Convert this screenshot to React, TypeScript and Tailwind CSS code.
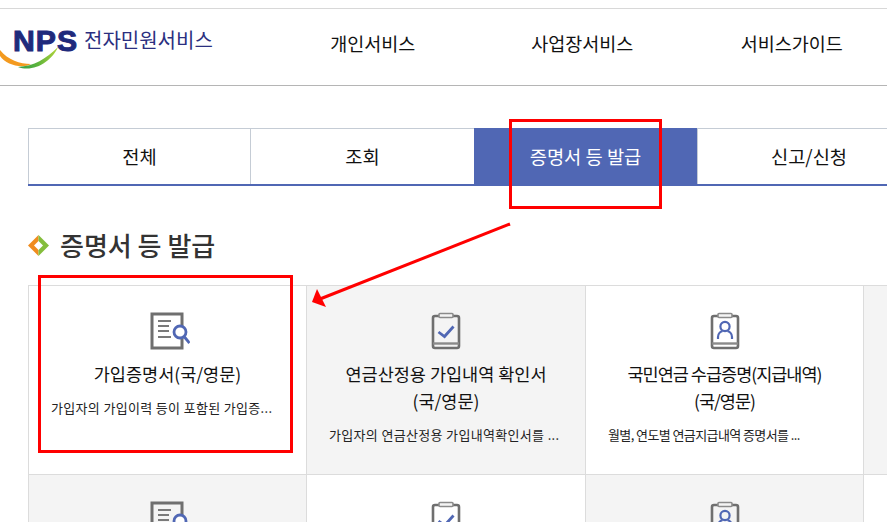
const font = { fontFamily: '"Noto Sans CJK KR", "Noto Sans", sans-serif' }

function DocIcon() {
    return (
        <svg className="ml-[4px]" width="40" height="38" viewBox="0 0 40 38" fill="none">
            <rect x="2" y="2" width="30" height="34" stroke="#6f6f6f" strokeWidth="3" />
            <path d="M8 9h13M8 14h11M8 19h11M8 25h13" stroke="#7a7a7a" strokeWidth="2.2" />
            <circle cx="30" cy="20" r="6" fill="#fff" stroke="#5067b4" strokeWidth="2.8" />
            <path d="M34.5 25l5 6" stroke="#5067b4" strokeWidth="2.8" />
        </svg>
    )
}

function CheckIcon() {
    return (
        <svg width="30" height="38" viewBox="0 0 30 38" fill="none">
            <rect x="2" y="4" width="26" height="32" rx="2" stroke="#6f6f6f" strokeWidth="2.6" />
            <rect x="8" y="1.5" width="14" height="4" rx="1" fill="#f4f4f4" stroke="#8a8a8a" strokeWidth="1.6" />
            <path d="M2 31.5h26" stroke="#8a8a8a" strokeWidth="2.4" />
            <path d="M7.5 20l6 4.5 9-10" stroke="#5067b4" strokeWidth="2.8" />
        </svg>
    )
}

function PersonIcon() {
    return (
        <svg width="30" height="38" viewBox="0 0 30 38" fill="none">
            <rect x="2" y="4" width="26" height="32" rx="2" stroke="#6f6f6f" strokeWidth="2.6" />
            <rect x="8" y="1.5" width="14" height="4" rx="1" fill="#f4f4f4" stroke="#8a8a8a" strokeWidth="1.6" />
            <path d="M2 31.5h26" stroke="#8a8a8a" strokeWidth="2.4" />
            <circle cx="15" cy="14.5" r="4.6" stroke="#5067b4" strokeWidth="2.2" />
            <path d="M8 27v-2c0-3.5 3-5.5 4.5-6M22 27v-2c0-3.5-3-5.5-4.5-6" stroke="#5067b4" strokeWidth="2.2" />
        </svg>
    )
}

interface CardProps {
    icon: React.ReactNode
    title?: string[]
    desc?: string
    gray?: boolean
    tight?: boolean
}

function Card({ icon, title, desc, gray, tight }: CardProps) {
    return (
        <div className={`h-[189px] border-l border-b border-[#dcdcdc] px-[22px] pt-[26px] flex flex-col items-center ${gray ? "bg-[#f4f4f4]" : "bg-white"}`}>
            <div className="h-[38px] flex items-center justify-center">{icon}</div>
            {title && (
                <div className={`mt-[10px] text-center text-[17.5px] leading-[27px] text-[#111] ${tight ? "tracking-[-1px]" : ""}`}>
                    {title.map((line) => (
                        <div key={line}>{line}</div>
                    ))}
                </div>
            )}
            {desc && (
                <p className={`mt-[11px] w-full whitespace-nowrap text-[13px] leading-[20px] text-[#222] ${tight ? "tracking-[-0.6px]" : "tracking-[0.33px]"}`}>{desc}</p>
            )}
        </div>
    )
}

export default function App() {
    const tabs = ["전체", "조회", "증명서 등 발급", "신고/신청"]

    return (
        <div className="relative w-[887px] h-[522px] overflow-hidden bg-white pt-2" style={font}>
            {/* Header */}
            <header className="h-[78px] border-t border-b border-t-[#d8d8d8] border-b-[#b5b5b5] flex">
                <div className="relative w-[268px] shrink-0">
                    <svg className="absolute left-0 top-[37px]" width="60" height="24" viewBox="0 0 60 24" fill="none">
                        <defs>
                            <linearGradient id="swoosh" x1="0" x2="1" y1="0" y2="0">
                                <stop offset="0" stopColor="#2f9e4a" />
                                <stop offset="0.5" stopColor="#5db43c" />
                                <stop offset="1" stopColor="#b4d43a" />
                            </linearGradient>
                        </defs>
                        <path d="M0 4C8 14 20 18 31 18 C22 23 6 19 0 10Z" fill="#f39a1f" />
                        <path d="M18 21C34 20 46 13 58 1 C52 15 34 27 18 21Z" fill="url(#swoosh)" />
                    </svg>
                    <div className="relative flex items-center pl-[13px] pt-[16px]">
                        <span className="text-[29px] leading-[32px] font-bold text-[#1f2a7c] tracking-[1px] w-[71px] scale-x-[1.04] origin-left [-webkit-text-stroke:1px_#1f2a7c]" style={{ fontFamily: '"Liberation Sans", sans-serif' }}>NPS</span>
                        <span className="text-[20px] leading-[28px] text-[#2b2f80] -mt-[3px]">전자민원서비스</span>
                    </div>
                </div>
                <nav className="flex">
                    {["개인서비스", "사업장서비스", "서비스가이드"].map((item) => (
                        <div key={item} className="w-[209.5px] pt-[19px] text-center text-[18.5px] leading-[30px] text-[#111]">{item}</div>
                    ))}
                </nav>
            </header>

            {/* Tabs */}
            <div className="ml-[28px] mt-[42px] grid grid-cols-[222px_224px_223px_223px] w-[900px] h-[58px] border-b-2 border-[#5067b4]">
                {tabs.map((tab, i) => (
                    <div
                        key={tab}
                        className={`flex items-center justify-center text-[18.7px] ${
                            i === 2
                                ? "bg-[#5067b4] text-white"
                                : "bg-white text-[#111] border-t border-[#c5ccd5] border-l"
                        }`}
                    >
                        {tab}
                    </div>
                ))}
            </div>

            {/* Section title */}
            <div className="ml-[28px] mt-[41px] flex items-center gap-[11px] h-[36px]">
                <svg width="21" height="21" viewBox="0 0 21 21">
                    <path d="M10.5 0L0 10.5 10.5 21z" fill="#f08c1e" />
                    <path d="M10.5 0L21 10.5 10.5 21z" fill="#84bd3c" />
                    <path d="M10.5 6L6 10.5 10.5 15 15 10.5z" fill="#fff" />
                </svg>
                <h2 className="text-[26px] leading-[36px] font-medium text-[#333]">증명서 등 발급</h2>
            </div>

            {/* Cards */}
            <div className="ml-[28px] mt-[22px] w-[900px] grid grid-cols-[278px_279px_278px_65px] border-t border-[#dcdcdc]">
                <Card icon={<DocIcon />} title={["가입증명서(국/영문)"]} desc="가입자의 가입이력 등이 포함된 가입증..." />
                <Card gray icon={<CheckIcon />} title={["연금산정용 가입내역 확인서", "(국/영문)"]} desc="가입자의 연금산정용 가입내역확인서를 ..." />
                <Card tight icon={<PersonIcon />} title={["국민연금 수급증명(지급내역)", "(국/영문)"]} desc="월별, 연도별 연금지급내역 증명서를 ..." />
                <Card gray icon={null} />
                <Card gray icon={<DocIcon />} />
                <Card icon={<CheckIcon />} />
                <Card gray icon={<PersonIcon />} />
                <Card icon={null} />
            </div>

            {/* Annotations drawn over the page */}
            <div className="absolute left-[509px] top-[119px] w-[153px] h-[90px] border-[3px] border-[#ff0000]" />
            <div className="absolute left-[38px] top-[275px] w-[255px] h-[178px] border-[3px] border-[#ff0000]" />
            <svg className="absolute left-0 top-0 pointer-events-none" width="887" height="522" fill="none">
                <path d="M510 224L320 299" stroke="#ff0000" strokeWidth="3" />
                <path d="M312 302L317 289 326 307Z" fill="#ff0000" />
            </svg>
        </div>
    )
}
